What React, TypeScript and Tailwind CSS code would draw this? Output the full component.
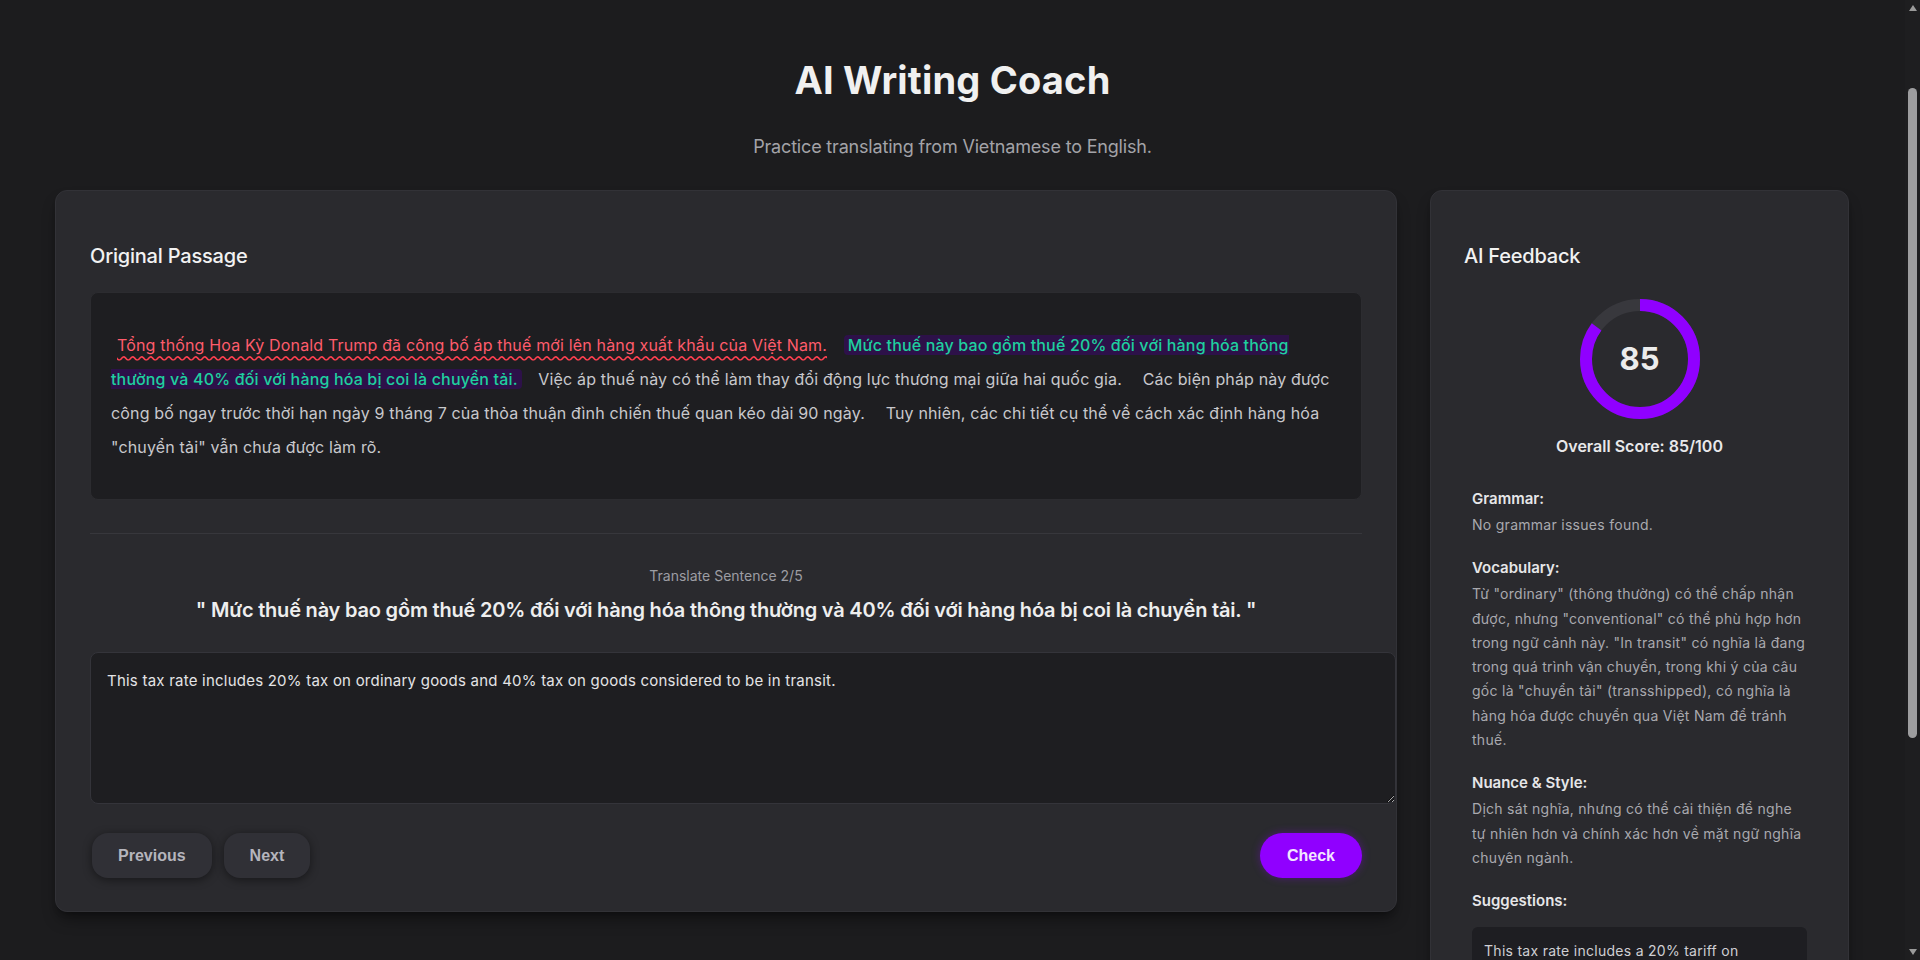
import * as React from "react";

const sentences = [
  {
    text: "Tổng thống Hoa Kỳ Donald Trump đã công bố áp thuế mới lên hàng xuất khẩu của Việt Nam.",
    state: "error",
  },
  {
    text: "Mức thuế này bao gồm thuế 20% đối với hàng hóa thông thường và 40% đối với hàng hóa bị coi là chuyển tải.",
    state: "active",
  },
  {
    text: "Việc áp thuế này có thể làm thay đổi động lực thương mại giữa hai quốc gia.",
    state: "idle",
  },
  {
    text: "Các biện pháp này được công bố ngay trước thời hạn ngày 9 tháng 7 của thỏa thuận đình chiến thuế quan kéo dài 90 ngày.",
    state: "idle",
  },
  {
    text: 'Tuy nhiên, các chi tiết cụ thể về cách xác định hàng hóa "chuyển tải" vẫn chưa được làm rõ.',
    state: "idle",
  },
];

const feedback = [
  { title: "Grammar:", body: "No grammar issues found." },
  {
    title: "Vocabulary:",
    body: 'Từ "ordinary" (thông thường) có thể chấp nhận được, nhưng "conventional" có thể phù hợp hơn trong ngữ cảnh này. "In transit" có nghĩa là đang trong quá trình vận chuyển, trong khi ý của câu gốc là "chuyển tải" (transshipped), có nghĩa là hàng hóa được chuyển qua Việt Nam để tránh thuế.',
  },
  {
    title: "Nuance & Style:",
    body: "Dịch sát nghĩa, nhưng có thể cải thiện để nghe tự nhiên hơn và chính xác hơn về mặt ngữ nghĩa chuyên ngành.",
  },
];

const ScoreRing = ({ score }: { score: number }) => {
  const r = 54;
  const c = 2 * Math.PI * r;
  return (
    <div className="relative w-[120px] h-[120px]">
      <svg width="120" height="120" viewBox="0 0 120 120" className="-rotate-90">
        <circle cx="60" cy="60" r={r} fill="none" stroke="#38383d" strokeWidth="12" />
        <circle
          cx="60"
          cy="60"
          r={r}
          fill="none"
          stroke="#9000ff"
          strokeWidth="12"
          strokeDasharray={c}
          strokeDashoffset={c * (1 - score / 100)}
        />
      </svg>
      <div className="absolute inset-0 flex items-center justify-center text-[31px] font-bold text-[#ececec]">
        {score}
      </div>
    </div>
  );
};

// stand-in for the browser scrollbar seen in the screenshot
const FakeScrollbar = () => (
  <div className="fixed right-0 top-0 h-screen w-[15px] bg-[#1e1e20] flex flex-col items-center">
    <svg width="8" height="6" viewBox="0 0 8 6" className="mt-[5px]">
      <path d="M4 0 L8 6 L0 6 Z" fill="#9a9a9a" />
    </svg>
    <div className="mt-[77px] h-[650px] w-[9px] rounded-full bg-[#9d9d9f]" />
    <svg width="8" height="6" viewBox="0 0 8 6" className="mt-auto mb-[5px]">
      <path d="M0 0 L8 0 L4 6 Z" fill="#9a9a9a" />
    </svg>
  </div>
);

export default function App() {
  const [answer, setAnswer] = React.useState(
    "This tax rate includes 20% tax on ordinary goods and 40% tax on goods considered to be in transit."
  );

  return (
    <div className="h-screen overflow-y-scroll bg-[#1c1c1e] font-['Inter',sans-serif] text-[#e6e6e8]">
      <FakeScrollbar />
      <div className="pb-16 pr-[15px]">
        <header className="pt-[58px] text-center">
          <h1 className="text-[38px] leading-[44px] font-bold tracking-[0.005em] text-[#f0f0f0]">
            AI Writing Coach
          </h1>
          <p className="mt-[31px] text-lg leading-7 text-[#a3a3a8] tracking-[-0.01em]">
            Practice translating from Vietnamese to English.
          </p>
        </header>

        <main className="mt-[29px] pl-[55px] flex items-start gap-[33px]">
          <section className="w-[1342px] shrink-0 rounded-xl border border-[#323237] bg-[#2a2a2e] px-[34px] pt-[51px] pb-[33px] shadow-lg shadow-black/40">
            <h2 className="text-xl leading-7 font-medium text-[#f2f2f2] tracking-[-0.01em]">
              Original Passage
            </h2>

            <div className="mt-[22px] rounded-lg border border-[#2c2c30] bg-[#1e1e21] px-5 py-[35px] text-base leading-[34px] tracking-[0.01em] text-[#c8c8cc]">
              {sentences.map((s, i) => (
                <React.Fragment key={i}>
                  <span
                    className={
                      s.state === "error"
                        ? "mx-1 pl-0.5 pr-1 text-[#ff5c6c] underline decoration-wavy decoration-[#ff4050] underline-offset-4"
                        : s.state === "active"
                          ? "mx-1 px-1 rounded bg-[#2d1149] text-[#1fcf9f] font-medium"
                          : "mx-1 px-1"
                    }
                    style={{ boxDecorationBreak: "slice" }}
                  >
                    {s.text}
                  </span>{" "}
                </React.Fragment>
              ))}
            </div>

            <div className="mt-[33px] border-t border-[#37373c]" />

            <p className="mt-[32px] text-center text-sm leading-5 text-[#9d9da3]">
              Translate Sentence 2/5
            </p>
            <p className="mt-[10px] text-center text-xl leading-7 font-semibold text-[#eeeeee] tracking-[-0.01em]">
              " Mức thuế này bao gồm thuế 20% đối với hàng hóa thông thường và 40% đối với hàng hóa bị coi là chuyển tải. "
            </p>

            <textarea
              value={answer}
              onChange={(e) => setAnswer(e.target.value)}
              className="mt-[28px] box-content block w-full h-[118px] rounded-lg border border-[#34343a] bg-[#1e1e21] p-4 text-[15px] leading-6 tracking-[0.015em] text-[#e4e4e6] outline-none"
            />

            <div className="mt-[29px] flex items-center justify-between">
              <div className="flex gap-3 pl-[2px]">
                <button className="h-[45px] rounded-2xl bg-[#303036] px-[26px] font-['Liberation_Sans',sans-serif] text-base font-bold text-[#b5b5bd] shadow-[0_2px_10px_rgba(0,0,0,0.45)]">
                  Previous
                </button>
                <button className="h-[45px] rounded-2xl bg-[#303036] px-[26px] font-['Liberation_Sans',sans-serif] text-base font-bold text-[#b5b5bd] shadow-[0_2px_10px_rgba(0,0,0,0.45)]">
                  Next
                </button>
              </div>
              <button className="h-[45px] rounded-full bg-[#9000ff] px-[27px] font-['Liberation_Sans',sans-serif] text-base font-bold text-[#f3e6ff] shadow-[0_0_8px_rgba(144,0,255,0.35)]">
                Check
              </button>
            </div>
          </section>

          <aside className="w-[419px] shrink-0 rounded-xl border border-[#323237] bg-[#2a2a2e] px-[33px] pt-[51px] pb-8 shadow-lg shadow-black/40">
            <h2 className="text-xl leading-7 font-medium text-[#f2f2f2] tracking-[-0.01em]">
              AI Feedback
            </h2>

            <div className="mt-[29px] flex flex-col items-center">
              <ScoreRing score={85} />
              <p className="mt-[15px] text-base leading-6 font-semibold text-[#e8e8ea]">
                Overall Score: 85/100
              </p>
            </div>

            <div className="mt-[29px] px-2 flex flex-col gap-[19px]">
              {feedback.map((f) => (
                <div key={f.title}>
                  <h3 className="text-[15px] leading-6 font-semibold text-[#e6e6e8]">{f.title}</h3>
                  <p className="mt-[2px] text-sm leading-[24.3px] tracking-[0.02em] text-[#a9a9ae]">{f.body}</p>
                </div>
              ))}
              <div>
                <h3 className="text-[15px] leading-6 font-semibold text-[#e6e6e8]">Suggestions:</h3>
                <div className="mt-[14px] rounded-md bg-[#1e1e22] px-3 py-3 text-sm leading-6 tracking-[0.02em] text-[#cfcfd3]">
                  This tax rate includes a 20% tariff on conventional goods and a 40% tariff on goods deemed to be transshipped.
                </div>
              </div>
            </div>
          </aside>
        </main>
      </div>
    </div>
  );
}
